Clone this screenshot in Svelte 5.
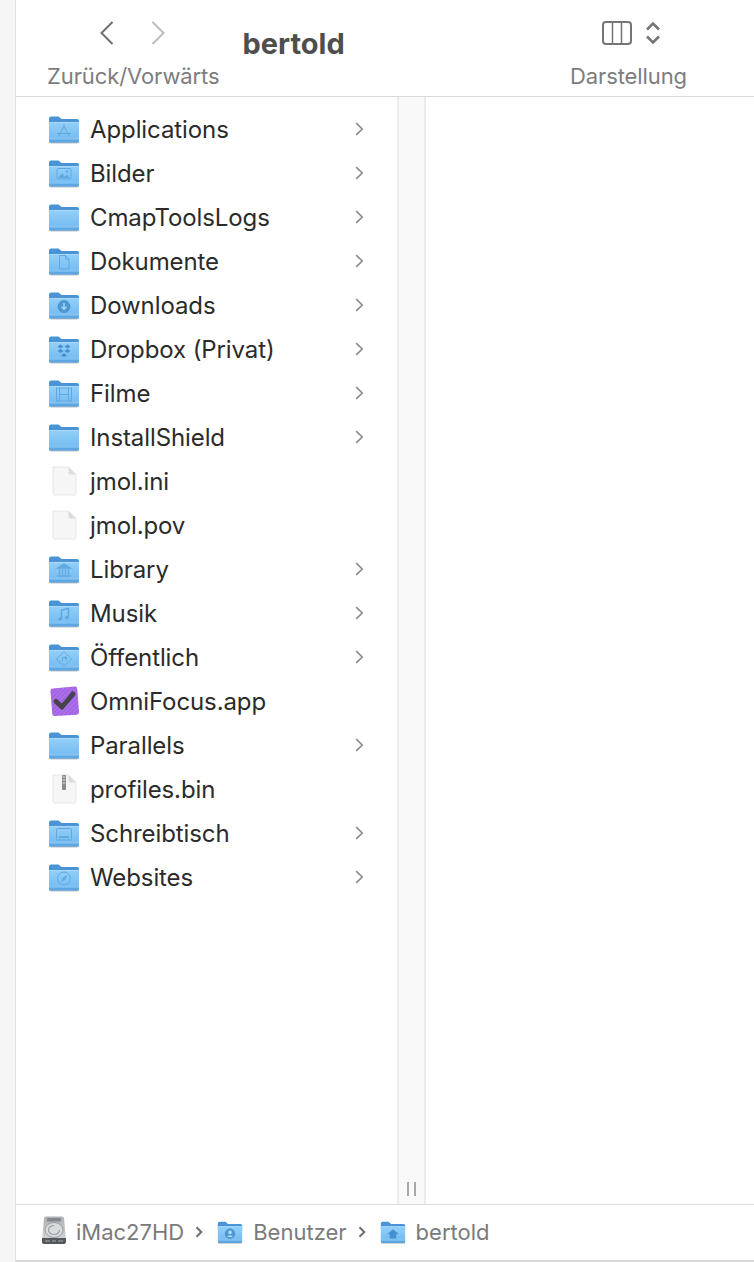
<script>
  const rows = [
    { name: 'Applications', icon: 'apps', dir: true },
    { name: 'Bilder', icon: 'pictures', dir: true },
    { name: 'CmapToolsLogs', icon: 'plain', dir: true },
    { name: 'Dokumente', icon: 'docs', dir: true },
    { name: 'Downloads', icon: 'downloads', dir: true },
    { name: 'Dropbox (Privat)', icon: 'dropbox', dir: true },
    { name: 'Filme', icon: 'movies', dir: true },
    { name: 'InstallShield', icon: 'plain', dir: true },
    { name: 'jmol.ini', icon: 'file' },
    { name: 'jmol.pov', icon: 'file' },
    { name: 'Library', icon: 'library', dir: true },
    { name: 'Musik', icon: 'music', dir: true },
    { name: 'Öffentlich', icon: 'public', dir: true },
    { name: 'OmniFocus.app', icon: 'omni' },
    { name: 'Parallels', icon: 'plain', dir: true },
    { name: 'profiles.bin', icon: 'zip' },
    { name: 'Schreibtisch', icon: 'desktop', dir: true },
    { name: 'Websites', icon: 'sites', dir: true }
  ];
</script>

{#snippet folder(glyph)}
  <svg class="ico" viewBox="0 0 32 30">
    <defs>
      <linearGradient id="folderBody" x1="0" y1="0" x2="0" y2="1">
        <stop offset="0" stop-color="#93d0f9" />
        <stop offset="1" stop-color="#70b8ef" />
      </linearGradient>
    </defs>
    <rect x="1.500" y="27" width="29" height="2.600" rx="1.300" fill="#8b8b8b" opacity=".55" />
    <path d="M1 4.500a2 2 0 0 1 2-2h7.500l3 2.500H29a2 2 0 0 1 2 2V12H1z" fill="#4993d6" />
    <rect x="1" y="8" width="30" height="20.500" rx="1.800" fill="url(#folderBody)" />
    <rect x="1" y="8" width="30" height="1" fill="#a9dafb" />
    <rect x="1" y="23.500" width="30" height="1" fill="#85c4f4" />
    <rect x="1" y="26" width="30" height="2.500" rx="1.200" fill="#5fa6e0" />
    <g fill="none" stroke="#62a8e0" stroke-width="1">
      {#if glyph === 'apps'}
        <path d="M16 10v2.500M16 12.500 10.500 22.500M16 12.500 21.500 22.500M9 19.500h14" />
      {:else if glyph === 'pictures'}
        <rect x="9" y="10.500" width="14" height="10.500" rx="1" />
        <path d="M10 20l4-4.500 3 3 2-2 3 3.500z" fill="#62a8e0" stroke="none" />
        <circle cx="19" cy="13.500" r="1.200" fill="#62a8e0" stroke="none" />
      {:else if glyph === 'docs'}
        <path d="M11.500 9.500h6l3.500 3.500v10h-9.500zM17.500 9.500v3.500h3.500" />
      {:else if glyph === 'downloads'}
        <circle cx="16" cy="16.500" r="6.500" fill="#4f97d2" stroke="none" />
        <path d="M16 13v6M13.500 16.700l2.500 2.500 2.500-2.500" stroke="#a9dafb" stroke-width="1.400" />
      {:else if glyph === 'dropbox'}
        <path d="M12.500 10.500l3 2-3 2-3-2zM19.500 10.500l3 2-3 2-3-2zM12.500 15l3 2-3 2-3-2zM19.500 15l3 2-3 2-3-2zM16 19.200l3 2-3 2-3-2z" fill="#4590d0" stroke="none" />
      {:else if glyph === 'movies'}
        <rect x="8.500" y="10" width="15" height="13" />
        <path d="M11.500 10v13M20.500 10v13M11.500 16.500h9" />
      {:else if glyph === 'library'}
        <path d="M9.500 14l6.500-4 6.500 4zM11.500 15v6M14.500 15v6M17.500 15v6M20.500 15v6M9 22h14" fill="#62a8e0" stroke-width="1.300" />
      {:else if glyph === 'music'}
        <path d="M13.500 21V12l7-1.500v9" stroke-width="1.500" />
        <circle cx="12" cy="21" r="1.800" fill="#62a8e0" stroke="none" />
        <circle cx="19" cy="19.500" r="1.800" fill="#62a8e0" stroke="none" />
      {:else if glyph === 'public'}
        <path d="M16 9.500l7.500 7.500-7.500 7.500-7.500-7.500z" />
        <path d="M18.500 18.500v-3h-4v3.500M18.500 15.500l-1.500-1.500M18.500 15.500l-1.500 1.500" />
      {:else if glyph === 'desktop'}
        <rect x="8.500" y="10.500" width="15" height="11.500" rx="1" />
        <path d="M11 19h10" stroke-width="1.800" />
      {:else if glyph === 'sites'}
        <circle cx="16" cy="16.500" r="6.500" />
        <path d="M19.500 13l-2.300 4.700-4.400 2.300 2.300-4.700z" fill="#62a8e0" stroke="none" />
      {:else if glyph === 'user'}
        <circle cx="16" cy="17" r="6.500" fill="#4f97d2" stroke="none" />
        <circle cx="16" cy="15.500" r="2.200" fill="#b3def9" stroke="none" />
        <path d="M12.300 21a4 3 0 0 1 7.400 0z" fill="#b3def9" stroke="none" />
      {:else if glyph === 'home'}
        <path d="M9.500 17l6.500-5.500 6.500 5.500-1 1-1.500-1v6h-8v-6l-1.500 1z" fill="#4590d0" stroke="none" />
      {/if}
    </g>
  </svg>
{/snippet}

{#snippet icon(kind)}
  {#if kind === 'file' || kind === 'zip'}
    <svg class="ico" viewBox="0 0 32 30">
      <path d="M5 1h15.500L28 8.500V27.500a1.500 1.500 0 0 1-1.500 1.500h-20A1.500 1.500 0 0 1 5 27.500z" fill="#f6f6f6" stroke="#e2e2e2" stroke-width=".8" />
      <path d="M20.500 1 28 8.500h-6a1.500 1.500 0 0 1-1.500-1.500z" fill="#dcdcdc" />
      {#if kind === 'zip'}
        <rect x="14" y="1" width="4" height="15" rx="1" fill="#8b8b8b" />
        <path d="M14.800 3h2.400M14.800 6h2.400M14.800 9h2.400" stroke="#e6e6e6" stroke-width="1" />
      {/if}
    </svg>
  {:else if kind === 'omni'}
    <svg class="ico" viewBox="0 0 32 30">
      <defs>
        <pattern id="omniHatch" width="3" height="3" patternUnits="userSpaceOnUse" patternTransform="rotate(-45)">
          <rect width="3" height="1.300" fill="#c39bf3" opacity=".4" />
        </pattern>
      </defs>
      <path d="M5 2.500 26.500 .5a2.500 2.500 0 0 1 2.700 2.300L31 26a2.500 2.500 0 0 1-2.300 2.700L7 30a2.500 2.500 0 0 1-2.700-2.300L2.500 5.200A2.500 2.500 0 0 1 5 2.500z" fill="#a15fe4" />
      <path d="M5 2.500 26.500 .5a2.500 2.500 0 0 1 2.700 2.300L31 26a2.500 2.500 0 0 1-2.300 2.700L7 30a2.500 2.500 0 0 1-2.700-2.300L2.500 5.200A2.500 2.500 0 0 1 5 2.500z" fill="url(#omniHatch)" />
      <path d="M8 15.500l6 5.500L25 8" fill="none" stroke="#47434d" stroke-width="5" stroke-linejoin="round" stroke-linecap="round" />
    </svg>
  {:else}
    {@render folder(kind)}
  {/if}
{/snippet}

<div class="window">
  <header class="toolbar">
    <div class="tool nav">
      <div class="buttons">
        <svg width="16" height="26" viewBox="0 0 16 26"><path d="M13.500 2 2.500 13l11 11" fill="none" stroke="#6f6f6f" stroke-width="2" /></svg>
        <svg width="16" height="26" viewBox="0 0 16 26"><path d="M2.500 2l11 11-11 11" fill="none" stroke="#bdbdbd" stroke-width="2" /></svg>
      </div>
      <span class="label">Zurück/Vorwärts</span>
    </div>
    <h1>bertold</h1>
    <div class="tool view">
      <div class="buttons">
        <svg width="30" height="24" viewBox="0 0 30 24">
          <rect x="1" y="1" width="28" height="22" rx="3" fill="none" stroke="#757575" stroke-width="2" />
          <path d="M10.500 1v22M19.500 1v22" stroke="#757575" stroke-width="1.500" />
        </svg>
        <svg width="16" height="24" viewBox="0 0 16 24">
          <path d="M2 8.500l6-6 6 6M2 15.500l6 6 6-6" fill="none" stroke="#757575" stroke-width="2.600" />
        </svg>
      </div>
      <span class="label">Darstellung</span>
    </div>
  </header>

  <div class="columns">
    <ul class="list">
      {#each rows as r}
        <li>
          {@render icon(r.icon)}
          <span class="name">{r.name}</span>
          {#if r.dir}
            <svg class="more" width="9" height="14" viewBox="0 0 9 14"><path d="M1.200 1.200 7.200 7l-6 5.800" fill="none" stroke="#8a8a8a" stroke-width="1.600" /></svg>
          {/if}
        </li>
      {/each}
    </ul>
    <div class="resizer">
      <span class="grip"></span>
    </div>
    <div class="empty"></div>
  </div>

  <footer class="pathbar">
    <svg class="disk" width="24" height="28" viewBox="0 0 24 28">
      <defs>
        <linearGradient id="diskBody" x1="0" y1="0" x2="0" y2="1">
          <stop offset="0" stop-color="#aeb2b4" />
          <stop offset="1" stop-color="#d2d5d6" />
        </linearGradient>
      </defs>
      <path d="M4 .5h16a2 2 0 0 1 2 1.800L24 24H0L2 2.300A2 2 0 0 1 4 .5z" fill="url(#diskBody)" />
      <rect x="5" y="2" width="14" height="3.500" rx="1" fill="#85898c" />
      <ellipse cx="12" cy="14" rx="9" ry="7.500" fill="#d9dcdd" stroke="#989c9f" />
      <path d="M12 9.500a5.500 4.500 0 1 0 5.500 4.500" fill="none" stroke="#989c9f" stroke-width="1.200" />
      <path d="M0 22h24v4a2 2 0 0 1-2 2H2a2 2 0 0 1-2-2z" fill="#55585a" />
      <path d="M3 25h5M10 25h4M16 25h5" stroke="#a5a5a5" stroke-width="1.200" />
    </svg>
    <span class="crumb">iMac27HD</span>
    <svg class="sep" width="8" height="12" viewBox="0 0 8 12"><path d="M1.500 1.200 6.300 6l-4.800 4.800" fill="none" stroke="#6e6e6e" stroke-width="2" /></svg>
    <span class="small">{@render folder('user')}</span>
    <span class="crumb">Benutzer</span>
    <svg class="sep" width="8" height="12" viewBox="0 0 8 12"><path d="M1.500 1.200 6.300 6l-4.800 4.800" fill="none" stroke="#6e6e6e" stroke-width="2" /></svg>
    <span class="small">{@render folder('home')}</span>
    <span class="crumb">bertold</span>
  </footer>
</div>

<style>
  :global(body) {
    background: #f5f5f5;
  }
  .window {
    box-sizing: border-box;
    height: 1262px;
    margin-left: 15px;
    border-left: 1px solid #e2e2e2;
    background: #fff;
    display: flex;
    flex-direction: column;
    font-family: Inter, "Liberation Sans", sans-serif;
    overflow: hidden;
  }
  .toolbar {
    box-sizing: border-box;
    height: 97px;
    flex: none;
    border-bottom: 1px solid #d9d9d9;
    display: flex;
    align-items: flex-start;
    padding: 20px 67px 0 31px;
  }
  .tool {
    display: flex;
    flex-direction: column;
    align-items: center;
    gap: 18px;
  }
  .buttons {
    display: flex;
    align-items: center;
    height: 26px;
  }
  .nav .buttons { gap: 35px; margin-right: 2px; }
  .view .buttons { gap: 13px; padding-left: 5px; }
  .label {
    font-size: 22px;
    line-height: 24px;
    letter-spacing: -0.1px;
    color: #7d7d7d;
    white-space: nowrap;
  }
  h1 {
    margin: 6px auto 0 23px;
    font-size: 29px;
    line-height: 36px;
    font-weight: 700;
    color: #4e4e4e;
  }
  .columns {
    flex: 1;
    min-height: 0;
    display: grid;
    grid-template-columns: 381px 29px 1fr;
  }
  .list {
    list-style: none;
    margin: 0;
    padding: 10px 0 0;
  }
  li {
    display: flex;
    align-items: center;
    height: 44px;
    padding: 0 33px 0 32px;
    gap: 10px;
    font-size: 24px;
    letter-spacing: -0.1px;
    color: #2b2b2b;
  }
  .ico {
    width: 32px;
    height: 30px;
    flex: none;
  }
  .name { flex: 1; white-space: nowrap; }
  .more { flex: none; }
  .resizer {
    box-sizing: border-box;
    background: #f9f9f9;
    border-left: 2px solid #ececec;
    border-right: 2px solid #ececec;
    display: flex;
    justify-content: center;
    align-items: flex-end;
    padding-bottom: 8px;
  }
  .grip {
    width: 9px;
    height: 14px;
    border-left: 2px solid #a8a8a8;
    border-right: 2px solid #a8a8a8;
    box-sizing: border-box;
  }
  .pathbar {
    box-sizing: border-box;
    height: 58px;
    flex: none;
    border-top: 1px solid #dcdcdc;
    border-bottom: 2px solid #d9d9d9;
    display: flex;
    align-items: center;
    padding: 0 0 2px 26px;
    font-size: 22px;
    color: #7a7a7a;
  }
  .small {
    display: flex;
    width: 26px;
    height: 26px;
    flex: none;
  }
  .small .ico {
    width: 26px;
    height: 26px;
  }
  .disk { flex: none; margin-top: -3px; }
  .crumb { margin-left: 10px; white-space: nowrap; }
  .sep { margin: 0 14px 0 11px; flex: none; }
</style>
